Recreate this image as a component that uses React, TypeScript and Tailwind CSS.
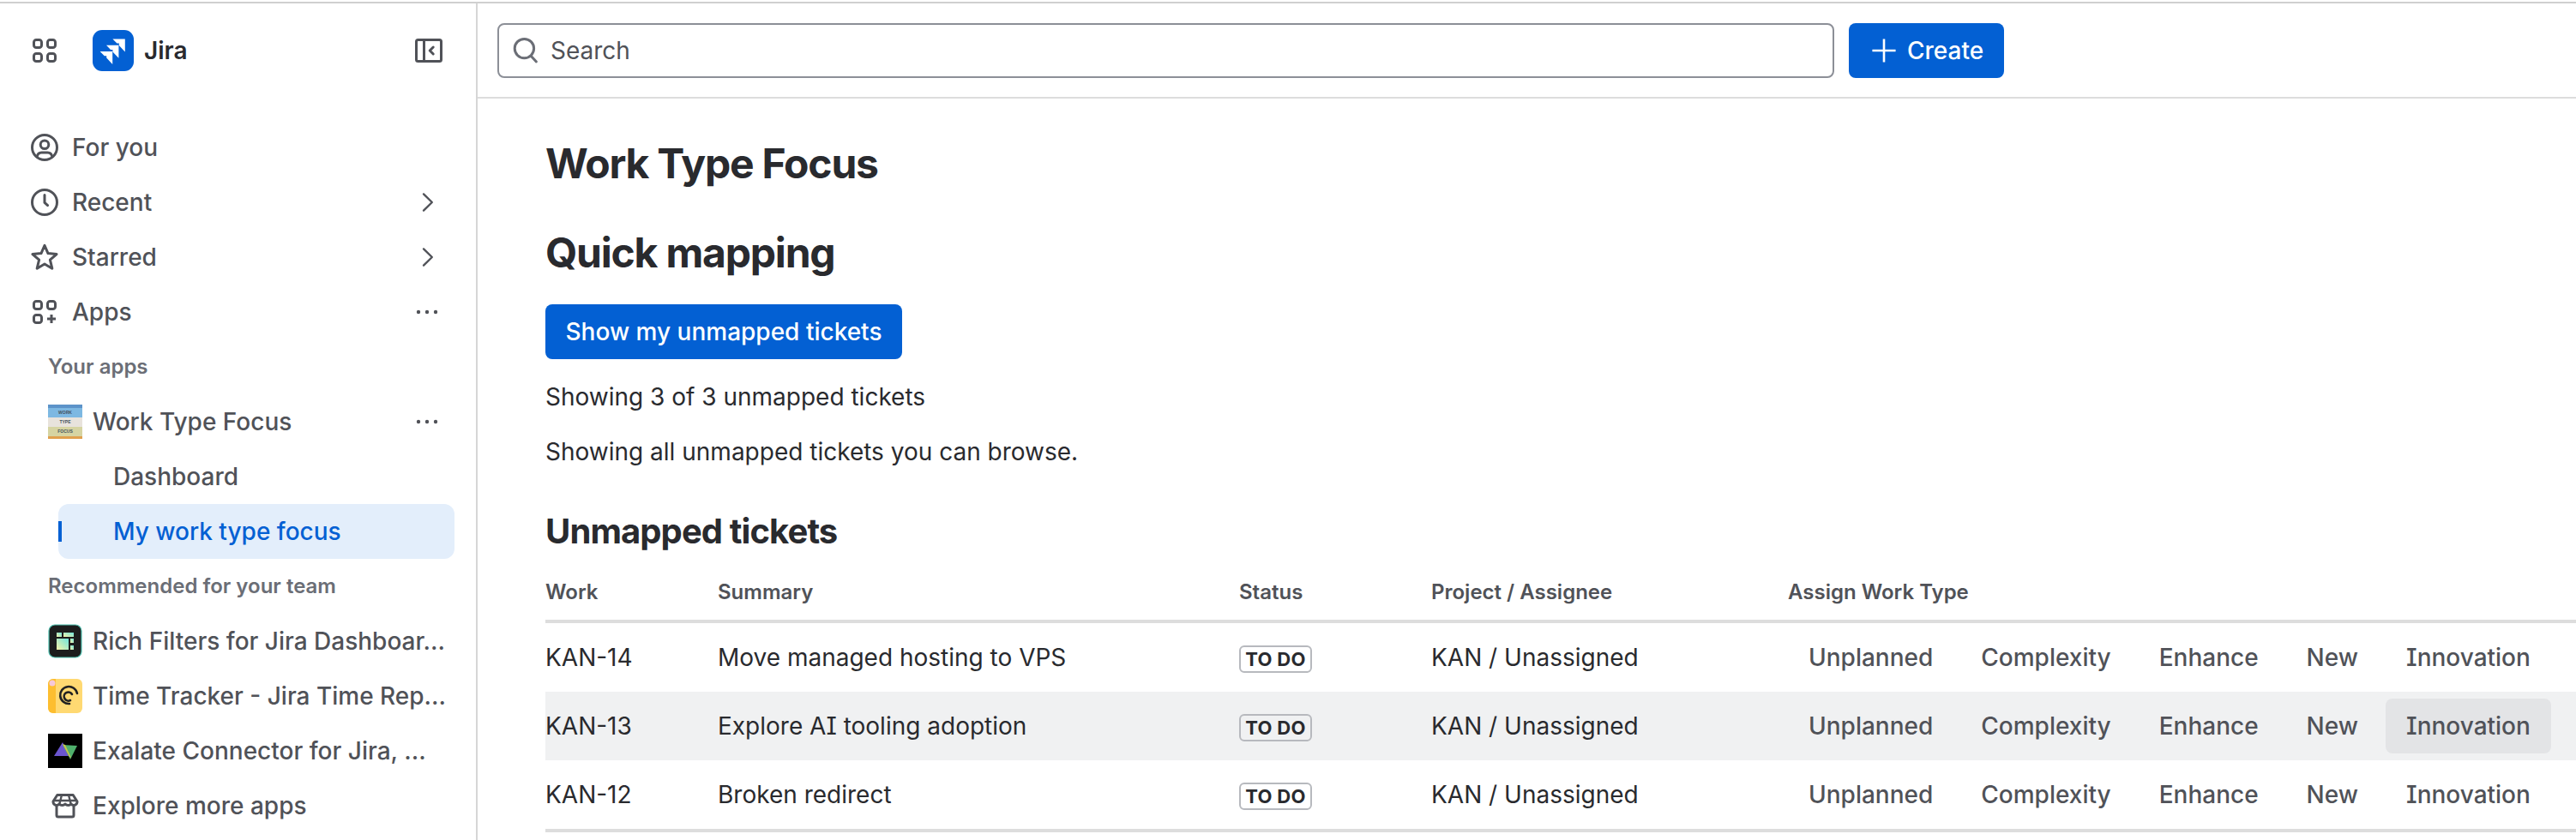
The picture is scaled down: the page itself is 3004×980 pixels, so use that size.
import type { ReactNode } from "react";

const ICON = "#505258";

function Ico({ children, size = 32, color = ICON, sw = 1.5 }: { children: ReactNode; size?: number; color?: string; sw?: number }) {
  return (
    <svg width={size} height={size} viewBox="0 0 16 16" fill="none" stroke={color} strokeWidth={sw} strokeLinecap="round" strokeLinejoin="round" className="shrink-0">
      {children}
    </svg>
  );
}

const GridIcon = () => (
  <Ico>
    <rect x="1.75" y="1.75" width="4.5" height="4.5" rx="1.4" />
    <rect x="9.75" y="1.75" width="4.5" height="4.5" rx="1.4" />
    <rect x="1.75" y="9.75" width="4.5" height="4.5" rx="1.4" />
    <rect x="9.75" y="9.75" width="4.5" height="4.5" rx="1.4" />
  </Ico>
);
const AppsIcon = () => (
  <Ico>
    <rect x="1.75" y="1.75" width="4.5" height="4.5" rx="1.4" />
    <rect x="9.75" y="1.75" width="4.5" height="4.5" rx="1.4" />
    <rect x="1.75" y="9.75" width="4.5" height="4.5" rx="1.4" />
    <path d="M12 9.5v5M9.5 12h5" strokeLinecap="butt" />
  </Ico>
);
const UserIcon = () => (
  <Ico>
    <circle cx="8" cy="8" r="7.25" />
    <circle cx="8" cy="6.4" r="2.4" />
    <path d="M3.6 13.4c.3-1.7 1.5-2.4 2.6-2.4h3.6c1.1 0 2.3.7 2.6 2.4" />
  </Ico>
);
const ClockIcon = () => (
  <Ico>
    <circle cx="8" cy="8" r="7.25" />
    <path d="M8 3.8v4.4l1.8 1.6" />
  </Ico>
);
const StarIcon = () => (
  <Ico>
    <path d="M8 1.2l2 4.6 5 .5-3.8 3.3 1.2 5L8 12l-4.4 2.6 1.2-5L1 6.3l5-.5z" />
  </Ico>
);
const Chevron = () => (
  <Ico>
    <path d="M5.5 3.2L10.4 8l-4.9 4.8" strokeWidth="1.2" />
  </Ico>
);
const Dots = () => (
  <svg width="32" height="32" viewBox="0 0 32 32" fill={ICON} className="shrink-0">
    <circle cx="5" cy="16" r="2.2" />
    <circle cx="15" cy="16" r="2.2" />
    <circle cx="25" cy="16" r="2.2" />
  </svg>
);
const StoreIcon = () => (
  <Ico>
    <path d="M3 8.5V13.5a1 1 0 0 0 1 1h8a1 1 0 0 0 1-1V8.5" />
    <path d="M3.4 1.75h9.2L15 5.5a2 2 0 0 1-3.5 1.5 2.4 2.4 0 0 1-3.5 0 2.4 2.4 0 0 1-3.5 0A2 2 0 0 1 1 5.5z" />
    <path d="M1.5 5h13M6 1.75L4.8 6.5M10 1.75l1.2 4.75" strokeWidth="1.2" />
  </Ico>
);
const JiraLogo = () => (
  <svg width="48" height="48" viewBox="0 0 24 24" className="shrink-0">
    <rect width="24" height="24" rx="5.5" fill="#0360D3" />
    <g fill="#fff">
      <polygon points="11.7,5.2 18.9,5.2 18.9,12.8 15.4,9 15.4,7.8 14.2,7.8" />
      <polygon points="8,8.9 15.2,8.9 15.2,16.4 11.7,12.7 11.7,11.5 10.5,11.5" />
      <polygon points="4.3,12.5 11.6,12.5 11.6,20 8.1,16.3 8.1,15.1 6.9,15.1" />
    </g>
  </svg>
);
const WorkTypeIcon = () => (
  <div className="flex h-10 w-10 shrink-0 flex-col overflow-hidden text-center font-['Liberation_Sans',sans-serif] text-[5px] font-bold leading-[11px] text-[#44505c]">
    <div className="h-[4px] bg-[#5c93c9]" />
    <div className="h-[11px] bg-[#7db8e2]">WORK</div>
    <div className="h-[11px] bg-[#e8e3dc]">TYPE</div>
    <div className="h-[11px] bg-[#d6d4a2]">FOCUS</div>
    <div className="h-[3px] bg-[#e0a04e]" />
  </div>
);
const RichIcon = () => (
  <svg width="40" height="40" viewBox="0 0 40 40" className="shrink-0">
    <defs>
      <linearGradient id="rich" x1="0" y1="1" x2="1" y2="0">
        <stop offset="0" stopColor="#f7f3a8" />
        <stop offset="1" stopColor="#6fe3dc" />
      </linearGradient>
    </defs>
    <rect x="1" y="1" width="38" height="38" rx="7" fill="#1d1d1d" stroke="#4fbfae" strokeWidth="1.2" />
    <g fill="url(#rich)">
      <rect x="10" y="10" width="6" height="5" />
      <rect x="18" y="10" width="12" height="5" />
      <rect x="10" y="17" width="14" height="13" />
      <rect x="26" y="17" width="4" height="5" />
      <rect x="26" y="25" width="4" height="5" />
    </g>
  </svg>
);
const TimeIcon = () => (
  <svg width="40" height="40" viewBox="0 0 40 40" className="shrink-0">
    <rect width="40" height="40" rx="6" fill="#FFD972" />
    <path d="M6 0H9V40H6a6 6 0 0 1-6-6V6a6 6 0 0 1 6-6z" fill="#FDBE30" />
    <circle cx="5" cy="5" r="3.5" fill="#f6c8d8" />
    <g fill="none" stroke="#222" strokeWidth="2.6" strokeLinecap="round">
      <path d="M34 17a10 10 0 1 0-9 12" />
      <path d="M28 18a5 5 0 1 0-2 7" />
    </g>
  </svg>
);
const ExalateIcon = () => (
  <svg width="40" height="40" viewBox="0 0 40 40" className="shrink-0">
    <rect width="40" height="40" fill="#000" />
    <polygon points="7,26 17,10 25,26" fill="#6b55cf" />
    <polygon points="17,13 34,14 26,30" fill="#4fb06c" />
    <polygon points="17,12 20,13 27,28 25,27" fill="#c9c24e" />
  </svg>
);

function NavRow({ icon, label, right }: { icon: ReactNode; label: string; right?: ReactNode }) {
  return (
    <div className="flex h-16 items-center pl-9 pr-10">
      {icon}
      <span className="ml-4 flex-1 text-[28px] font-medium leading-8 text-[#505258]">{label}</span>
      {right}
    </div>
  );
}

function AppRow({ icon, label, right }: { icon: ReactNode; label: string; right?: ReactNode }) {
  return (
    <div className="flex h-16 items-center pl-14 pr-10">
      {icon}
      <span className="ml-3 flex-1 whitespace-nowrap text-[28px] font-medium leading-8 text-[#505258]">{label}</span>
      {right}
    </div>
  );
}

function SectionLabel({ children }: { children: ReactNode }) {
  return <div className="flex h-16 items-center pl-14 text-[24px] font-semibold text-[#6b6e76]">{children}</div>;
}

function Sidebar() {
  return (
    <aside className="w-[557px] shrink-0 border-r-2 border-[#d6d6d6]">
      <div className="flex h-[136px] items-start pl-9 pr-[39px] pt-[31px]">
        <div className="mt-2">
          <GridIcon />
        </div>
        <div className="ml-10">
          <JiraLogo />
        </div>
        <span className="ml-3 mt-2 flex-1 text-[28px] font-semibold leading-8 text-[#292a2e]">Jira</span>
        <div className="mt-2">
          <Ico>
            <rect x="0.75" y="1.75" width="14.5" height="12.5" rx="1" />
            <path d="M5.25 1.75v12.5" />
            <path d="M10.6 6L8.6 8l2 2" />
          </Ico>
        </div>
      </div>
      <NavRow icon={<UserIcon />} label="For you" />
      <NavRow icon={<ClockIcon />} label="Recent" right={<Chevron />} />
      <NavRow icon={<StarIcon />} label="Starred" right={<Chevron />} />
      <NavRow icon={<AppsIcon />} label="Apps" right={<Dots />} />
      <SectionLabel>Your apps</SectionLabel>
      <AppRow icon={<WorkTypeIcon />} label="Work Type Focus" right={<Dots />} />
      <div className="flex h-16 items-center pl-[132px] text-[28px] font-medium text-[#505258]">Dashboard</div>
      <div className="relative ml-[68px] mr-[25px] flex h-16 items-center rounded-xl bg-[#e3eefb] pl-16 text-[28px] font-medium text-[#0360D3]">
        <div className="absolute left-0 top-5 h-6 w-1 bg-[#0360D3]" />
        My work type focus
      </div>
      <SectionLabel>Recommended for your team</SectionLabel>
      <AppRow icon={<RichIcon />} label="Rich Filters for Jira Dashboar..." />
      <AppRow icon={<TimeIcon />} label="Time Tracker - Jira Time Rep..." />
      <AppRow icon={<ExalateIcon />} label="Exalate Connector for Jira, ..." />
      <AppRow
        icon={
          <div className="flex w-10 shrink-0 justify-center">
            <StoreIcon />
          </div>
        }
        label="Explore more apps"
      />
    </aside>
  );
}

const ROWS = [
  { key: "KAN-14", summary: "Move managed hosting to VPS" },
  { key: "KAN-13", summary: "Explore AI tooling adoption", hover: true },
  { key: "KAN-12", summary: "Broken redirect" },
];

const TYPES = ["Unplanned", "Complexity", "Enhance", "New", "Innovation"];

function Table() {
  const cols = "grid grid-cols-[201px_608px_224px_416px_1fr] items-center";
  return (
    <div className="mt-[16px] border-b-4 border-[#dddddd]">
      <div className={`${cols} h-[67px] border-b-4 border-[#dddddd] pb-[2px] text-[24px] font-semibold text-[#505258]`}>
        <div>Work</div>
        <div>Summary</div>
        <div>Status</div>
        <div>Project / Assignee</div>
        <div>Assign Work Type</div>
      </div>
      {ROWS.map((r) => (
        <div key={r.key} className={`${cols} h-20 text-[28px] text-[#292a2e] ${r.hover ? "bg-[#f0f1f2]" : ""}`}>
          <div>{r.key}</div>
          <div>{r.summary}</div>
          <div>
            <span className="inline-flex h-8 w-[85px] items-center justify-center rounded-md border-2 border-[#b7b9be] text-[22px] font-bold leading-none tracking-[0.3px]">TO DO</span>
          </div>
          <div>KAN / Unassigned</div>
          <div className="flex gap-2">
            {TYPES.map((t) => (
              <div
                key={t}
                className={`flex h-16 items-center rounded-lg px-6 font-medium text-[#505258] ${r.hover && t === "Innovation" ? "bg-[#e3e4e6]" : ""}`}
              >
                {t}
              </div>
            ))}
          </div>
        </div>
      ))}
    </div>
  );
}

export default function App() {
  return (
    <div className="h-[980px] w-[3004px] overflow-hidden bg-white pt-[2px] font-['Inter',sans-serif] [font-feature-settings:'cv08']">
      <div className="flex h-[978px] border-t-2 border-[#d0d0d0]">
        <Sidebar />
        <main className="flex-1">
          <div className="flex h-[111px] items-start gap-[17px] border-b-2 border-[#dddddd] pl-[23px] pt-[23px]">
            <div className="flex h-[64px] w-[1559px] items-center rounded-lg border-2 border-[#8c8f97] pl-[15px]">
              <Ico color="#6b6e76">
                <circle cx="7.2" cy="6.8" r="5.6" />
                <path d="M11.2 11.2l3 3.3" />
              </Ico>
              <span className="ml-[13px] text-[28px] text-[#505258]">Search</span>
            </div>
            <div className="flex h-[64px] w-[181px] items-center rounded-lg bg-[#0360D3] pl-[25px] text-[28px] font-medium text-white">
              <Ico color="#ffffff" sw={1.3}>
                <path d="M8 1.2v13.6M1.2 8h13.6" strokeLinecap="butt" />
              </Ico>
              <span className="ml-[11px]">Create</span>
            </div>
          </div>
          <div className="pl-[79px] pt-12">
            <h1 className="text-[48px] font-bold leading-[56px] tracking-[-1.2px] text-[#292a2e]">Work Type Focus</h1>
            <h2 className="mt-12 text-[48px] font-bold leading-[56px] tracking-[-1.2px] text-[#292a2e]">Quick mapping</h2>
            <div className="mt-8 flex h-16 w-[416px] items-center justify-center rounded-lg bg-[#0360D3] text-[28px] font-medium text-white">Show my unmapped tickets</div>
            <p className="mt-6 text-[28px] leading-10 text-[#292a2e]">Showing 3 of 3 unmapped tickets</p>
            <p className="mt-6 text-[28px] leading-10 text-[#292a2e]">Showing all unmapped tickets you can browse.</p>
            <h3 className="mt-[49px] text-[40px] font-bold leading-[48px] tracking-[-0.9px] text-[#292a2e]">Unmapped tickets</h3>
            <Table />
          </div>
        </main>
      </div>
    </div>
  );
}
